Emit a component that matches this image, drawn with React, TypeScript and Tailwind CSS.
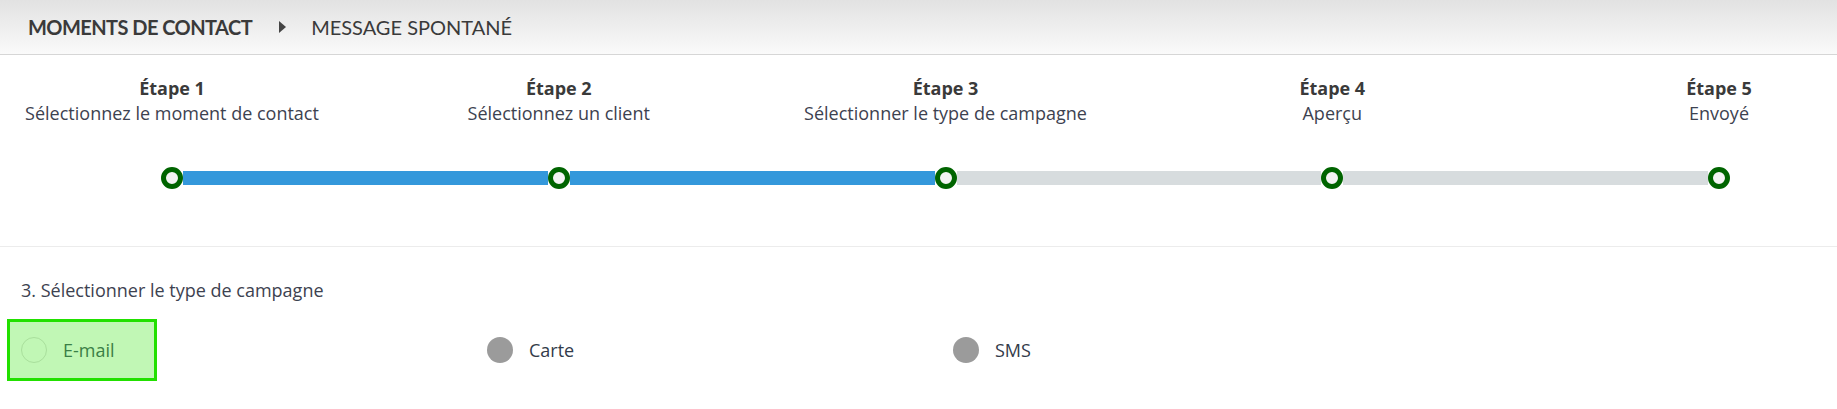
import { useState } from "react";

const steps = [
  { title: "Étape 1", label: "Sélectionnez le moment de contact" },
  { title: "Étape 2", label: "Sélectionnez un client" },
  { title: "Étape 3", label: "Sélectionner le type de campagne" },
  { title: "Étape 4", label: "Aperçu" },
  { title: "Étape 5", label: "Envoyé" },
];

const current = 3;

const options = ["E-mail", "Carte", "SMS"];

function Dot() {
  return (
    <div className="w-[22px] h-[22px] shrink-0 rounded-full border-[5px] border-[#006400] bg-[#f4f4f4]" />
  );
}

export default function App() {
  const [selected, setSelected] = useState("E-mail");

  return (
    <div className="w-[1837px] h-[409px] overflow-hidden bg-white text-[#3d4250] font-['Open_Sans',sans-serif]">
      {/* Breadcrumb */}
      <header className="h-[55px] flex items-center pl-[28px] pb-px border-b border-[#d6d6d6] bg-gradient-to-b from-[#e2e2e2] to-[#fafafa] font-['Lato',sans-serif] text-[20px] text-[#3a3a3a] uppercase">
        <span className="font-bold tracking-[-0.55px]">Moments de contact</span>
        <svg className="ml-[27px] mr-[25px]" width="7" height="12" viewBox="0 0 7 12">
          <path d="M0 0 L7 6 L0 12 Z" fill="#444" />
        </svg>
        <span>Message spontané</span>
      </header>

      {/* Steps */}
      <section className="pt-[21px] pb-[57px] border-b border-[#ececec]">
        <div className="ml-[172px] w-[1547px] flex justify-between text-[18px] leading-[25px]">
          {steps.map((s) => (
            <div key={s.title} className="w-0 flex flex-col items-center whitespace-nowrap">
              <span className="font-bold text-[#3a3a3a]">{s.title}</span>
              <span className="text-[#3d4250]">{s.label}</span>
            </div>
          ))}
        </div>
        <div className="ml-[161px] w-[1569px] mt-[41px] flex items-center">
          {steps.map((s, i) => (
            <div key={s.title} className={`flex items-center ${i < steps.length - 1 ? "flex-1" : ""}`}>
              <Dot />
              {i < steps.length - 1 && (
                <div className={`flex-1 h-[14px] ${i + 1 < current ? "bg-[#3498db]" : "bg-[#d7dcde]"}`} />
              )}
            </div>
          ))}
        </div>
      </section>

      {/* Campaign type */}
      <section className="pt-[31px]">
        <p className="pl-[21px] text-[18px] leading-[24px]">3. Sélectionner le type de campagne</p>
        <div className="mt-[17px] pl-[7px] grid grid-cols-[repeat(3,466px)]">
          {options.map((o) => {
            const active = selected === o;
            return (
              <button
                key={o}
                onClick={() => setSelected(o)}
                className={`w-[150px] h-[62px] flex items-center pl-[11px] border-[3px] text-[18px] ${
                  active ? "border-[#22e000] bg-[#c1f7b5] text-[#3b7f46]" : "border-transparent text-[#333b4a]"
                }`}
              >
                <span
                  className={`w-[26px] h-[26px] rounded-full shrink-0 ${
                    active ? "border border-[#a9df9c]" : "bg-[#9b9b9b]"
                  }`}
                />
                <span className="ml-[16px]">{o}</span>
              </button>
            );
          })}
        </div>
      </section>
    </div>
  );
}
